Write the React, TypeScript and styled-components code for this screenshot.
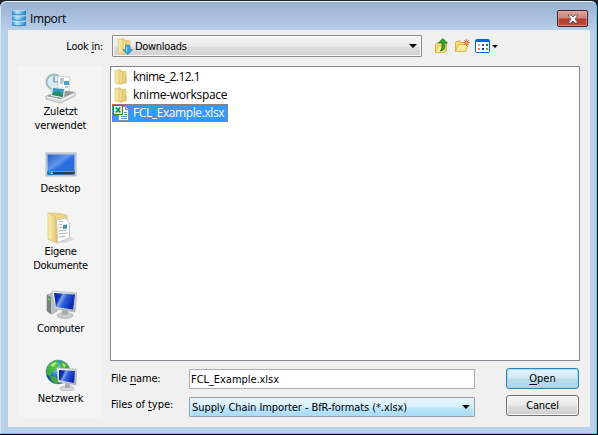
import React from 'react';
import styled, { createGlobalStyle } from 'styled-components';

const Global = createGlobalStyle`
  * { box-sizing: border-box; }
  html, body { margin: 0; padding: 0; overflow: hidden; background: #000; }
  svg { display: block; flex: none; }
`;

const Screen = styled.div`
  width: 598px;
  height: 435px;
  padding: 1px 1px 1px 0;
  background: linear-gradient(#23232b, #000 30px);
  font: 11px/14px 'DejaVu Sans Condensed', 'DejaVu Sans', sans-serif;
  font-stretch: condensed;
  color: #000;
`;

const Window = styled.div`
  display: flex;
  flex-direction: column;
  height: 433px;
  padding: 0 6px 6px 7px;
  border: 1px solid #35dcf2;
  border-top-color: #e9f2fa;
  border-left-color: #d9e8f5;
  border-radius: 6px 6px 0 0;
  background: linear-gradient(#9ab3d1 0, #a5bdda 12px, #b9d1ea 30px, #b9d1ea 100%);
`;

const TitleBar = styled.header`
  display: flex;
  align-items: flex-start;
  height: 28px;
  flex: none;
  padding: 7px 2px 0 3px;
`;

const Title = styled.h1`
  flex: 1;
  margin: 1px 0 0 3px;
  font: 12px/17px 'Open Sans', 'Noto Sans', sans-serif;
  letter-spacing: -0.4px;
`;

const CloseButton = styled.button`
  display: flex;
  align-items: center;
  justify-content: center;
  width: 31px;
  height: 17px;
  margin: 1px 0 0;
  padding: 0;
  border: 1px solid #43202a;
  border-radius: 2px;
  background: linear-gradient(#dba49b 0, #cf8377 7px, #b83b29 8px, #bd4b38 100%);
  box-shadow: inset 0 0 0 1px #e6b5ad99;
`;

const Content = styled.main`
  display: flex;
  flex-direction: column;
  flex: 1;
  min-height: 0;
  background: #f0f0f0;
`;

const Toolbar = styled.div`
  display: flex;
  align-items: center;
  height: 32px;
  flex: none;
`;

const Text = styled.span<{ $spacing?: number; $drop?: number }>`
  padding-top: ${({ $drop = 0 }) => $drop}px;
  letter-spacing: ${({ $spacing = 0 }) => $spacing}px;
  white-space: nowrap;
  u { text-underline-offset: 2px; text-decoration-thickness: 1px; text-decoration-skip-ink: none; }
`;

const LookLabel = styled.label`
  width: 95px;
  margin-right: 9px;
  padding-top: 2px;
  text-align: right;
`;

const LookSelect = styled.div`
  display: flex;
  align-items: center;
  gap: 2px;
  width: 310px;
  height: 22px;
  padding: 0 4px 0 3px;
  border: 1px solid #8b8b8b;
  border-radius: 1px;
  background: linear-gradient(#f3f3f3 0, #ececec 10px, #dedede 11px, #d0d0d0 100%);
  box-shadow: inset 0 0 0 1px #fafafa;
`;

const Grow = styled.div`
  flex: 1;
`;

const Tools = styled.div`
  display: flex;
  align-items: center;
  margin-left: 12px;
`;

const Tool = styled.div<{ $width: number }>`
  width: ${({ $width }) => $width}px;
`;

const Body = styled.div`
  display: flex;
  flex: 1;
  min-height: 0;
  padding: 4px 10px 10px;
`;

const Places = styled.nav`
  width: 85px;
  height: 351px;
  margin-right: 7px;
  padding-top: 6px;
  background: #f4f4f4;
`;

const Place = styled.div<{ $height: number }>`
  display: flex;
  flex-direction: column;
  align-items: center;
  height: ${({ $height }) => $height}px;
  text-align: center;
  svg { margin-bottom: 1px; }
`;

const Main = styled.div`
  display: flex;
  flex-direction: column;
  width: 470px;
`;

const FileList = styled.div`
  height: 295px;
  flex: none;
  padding: 1px 0 0 1px;
  border: 1px solid #828790;
  background: #fff;
  font: 12px/16px 'Open Sans', 'Noto Sans', sans-serif;
`;

const FileRow = styled.div<{ $selected?: boolean }>`
  display: flex;
  align-items: center;
  gap: 4px;
  width: ${({ $selected }) => ($selected ? '116px' : 'auto')};
  height: 18px;
  border: 1px ${({ $selected }) => ($selected ? 'dotted #d0700c' : 'solid transparent')};
  color: ${({ $selected }) => ($selected ? '#fff' : '#000')};
  background: ${({ $selected }) => ($selected ? '#3399ff' : 'transparent')};
`;

const Form = styled.div`
  display: grid;
  grid-template-columns: 78px 286px 73px;
  justify-content: start;
  padding: 7px 0 0 1px;
`;

const FieldLabels = styled.div`
  display: flex;
  flex-direction: column;
  gap: 12px;
  padding-top: 4px;
`;

const Fields = styled.div`
  display: flex;
  flex-direction: column;
  gap: 8px;
  padding-top: 1px;
`;

const NameField = styled.div`
  height: 20px;
  padding: 2px 1px;
  line-height: 16px;
  border: 1px solid #abadb3;
  background: #fff;
`;

const TypeField = styled.div`
  display: flex;
  align-items: center;
  height: 20px;
  padding: 0 4px 0 2px;
  border: 1px solid #98a0aa;
  border-radius: 1px;
  background: linear-gradient(#e8f5fc 0, #d8f0fc 9px, #bbe5fb 10px, #a9dbf7 100%);
  box-shadow: inset 1px 0 0 #cdefff, inset -1px 0 0 #cdefff;
`;

const Actions = styled.div`
  display: flex;
  flex-direction: column;
  gap: 6px;
  margin-left: 31px;
  width: 73px;
`;

const PushButton = styled.button<{ $primary?: boolean }>`
  height: 21px;
  padding: 1px 0 0;
  border: 1px solid ${({ $primary }) => ($primary ? '#3c7fb1' : '#707070')};
  border-radius: 3px;
  color: #000;
  font: inherit;
  line-height: 16px;
  background: ${({ $primary }) =>
    $primary
      ? 'linear-gradient(#e5f3fa 0, #d5eaf4 9px, #bcdeec 10px, #b2d3e3 100%)'
      : 'linear-gradient(#f2f2f2 0, #ebebeb 9px, #dddddd 10px, #cfcfcf 100%)'};
  box-shadow: inset 0 0 0 1px ${({ $primary }) => ($primary ? '#8fe0fa' : '#f7f7f7')};
`;

const Arrow = ({ w = 8 }: { w?: number }) => (
  <svg width={w} height={w / 2} viewBox="0 0 8 4"><path d="M0 0H8L4 4Z" fill="#000" /></svg>
);

const Gradients = () => (
  <svg width="0" height="0">
    <defs>
      <linearGradient id="folder"><stop stopColor="#fbf0b8" /><stop offset="1" stopColor="#e5c667" /></linearGradient>
      <linearGradient id="folderDark"><stop stopColor="#d8b44e" /><stop offset="1" stopColor="#f3de91" /></linearGradient>
      <linearGradient id="db"><stop stopColor="#2191d9" /><stop offset=".35" stopColor="#b4e6ff" /><stop offset="1" stopColor="#1d83cc" /></linearGradient>
      <linearGradient id="screen" x2="1" y2=".4"><stop stopColor="#0720a0" /><stop offset=".3" stopColor="#0d30b8" /><stop offset=".42" stopColor="#7fa3f0" /><stop offset=".6" stopColor="#2f5bda" /><stop offset="1" stopColor="#0829b5" /></linearGradient>
      <linearGradient id="desktop" x2="1" y2="1"><stop stopColor="#265cc6" /><stop offset=".4" stopColor="#6396ec" /><stop offset=".55" stopColor="#2a6de1" /><stop offset="1" stopColor="#2470e0" /></linearGradient>
      <linearGradient id="metal" x2="1" y2="1"><stop stopColor="#fff" /><stop offset="1" stopColor="#a5a9aa" /></linearGradient>
      <radialGradient id="globe" cx=".4" cy=".3"><stop stopColor="#b9f1ff" /><stop offset=".5" stopColor="#3c9bd9" /><stop offset="1" stopColor="#164b99" /></radialGradient>
    </defs>
  </svg>
);

const DatabaseIcon = () => (
  <svg width="16" height="18" viewBox="0 0 16 18">
    {[1, 6.5, 12].map((y) => (
      <g key={y}>
        <path d={`M1 ${y}Q8 ${y + 1} 15 ${y}V${y + 4.2}Q8 ${y + 5.4} 1 ${y + 4.2}Z`} fill="url(#db)" />
        <path d={`M1 ${y + 4.2}Q8 ${y + 5.4} 15 ${y + 4.2}`} fill="none" stroke="#1672b4" strokeWidth=".7" />
        <path d={`M1.500 ${y + 0.4}Q8 ${y + 1.2} 14.500 ${y + 0.4}`} fill="none" stroke="#d4f2ff" strokeWidth=".7" />
      </g>
    ))}
  </svg>
);

const FolderShape = () => (
  <>
    <path d="M7 3l6 -1v12l-6 1z" fill="url(#folderDark)" stroke="#d5b761" strokeWidth=".6" />
    <path d="M12 8l1.500 .5v5l-1.500 .8z" fill="#d9bd68" />
    <path d="M2 1.500l5-.8 1.200 1v13.600L2 14z" fill="url(#folder)" stroke="#d9bd66" strokeWidth=".7" />
    <path d="M8 3v11" stroke="#fff7c9" strokeWidth=".8" />
  </>
);

const FolderIcon = () => <svg width="16" height="16" viewBox="0 0 16 16"><FolderShape /></svg>;

const DownloadsIcon = () => (
  <svg width="17" height="17" viewBox="0 0 16 16">
    <FolderShape />
    <path d="M9 7h4v4h2.500L11 15.700 6.800 11H9z" fill="#31aaf0" stroke="#187abd" strokeWidth=".7" />
    <path d="M10 8v5" stroke="#8edaff" />
  </svg>
);

const CloseIcon = () => (
  <svg width="12" height="10" viewBox="0 0 12 10">
    <path d="M1 1h3l2 2 2-2h3L8 5l3 4H8L6 7 4 9H1l3-4z" fill="#fff" stroke="#52536a" strokeWidth=".9" />
  </svg>
);

const OpenFolder = () => (
  <>
    <path d="M1.500 13.500V4.500L3 3h3l1.500 1.500h5v8z" fill="#f5d675" stroke="#dcae39" />
    <path d="M1.500 13.500l3-7h10l-3 7z" fill="#ffeba0" stroke="#e3b94b" />
  </>
);

const UpIcon = () => (
  <svg width="16" height="16" viewBox="0 0 16 16">
    <path d="M1.500 14.500V6L4 4.500h8.500V13l-2 1.500z" fill="#f8dd80" stroke="#dcae39" />
    <path d="M1.500 14.500l3-6.500h8.500l-2.500 6.500z" fill="#ffeba0" stroke="#e3b94b" strokeWidth=".8" />
    <path d="M4.500 5L8.700 .6 13.500 5h-2.700v4.500Q10.500 12.500 6 13q2-1.500 2-4V5z" fill="#36a529" stroke="#187a18" strokeWidth=".8" />
  </svg>
);

const NewFolderIcon = () => (
  <svg width="17" height="16" viewBox="0 0 17 16">
    <OpenFolder />
    <path d="M12.500 1v7M9 4.500h7M10 2l5 5M15 2l-5 5" stroke="#f47c50" strokeWidth="1" />
    <circle cx="12.500" cy="4.500" r="1.500" fill="#ffd06a" stroke="#ef5230" />
  </svg>
);

const ViewIcon = () => (
  <svg width="15" height="14" viewBox="0 0 15 14">
    <rect x=".5" y=".5" width="14" height="13" rx="1" fill="#fff" stroke="#0762c8" />
    <path d="M1 1h13v2H1z" fill="#0868d6" />
    <path d="M3 5h2v2H3z" fill="#a9a9c0" /><path d="M7 5h2v2H7z" fill="#3e58c8" /><path d="M11 5h2v2h-2z" fill="#07930d" />
    <path d="M3 9h2v2H3z" fill="#ff7655" /><path d="M7 9h2v2H7z" fill="#183a91" /><path d="M11 9h2v2h-2z" fill="#c59712" />
  </svg>
);

const ExcelIcon = () => (
  <svg width="16" height="16" viewBox="0 0 16 16">
    <path d="M5.500 1.500h7l3 3v11h-10z" fill="#f5faff" stroke="#7b92aa" />
    <path d="M12.500 1.500v3h3" fill="#cddcea" stroke="#7b92aa" />
    <path d="M8 11.500h6M8 13.500h6M11 7.500h3M11 9.500h3" stroke="#7494bd" />
    <rect x=".5" y=".5" width="9" height="9" fill="#e9f5e7" stroke="#2e812d" />
    <path d="M2.800 2.500l4.500 5M7.300 2.500l-4.500 5" stroke="#1d8429" strokeWidth="1.700" />
  </svg>
);

const RecentIcon = () => (
  <svg width="32" height="32" viewBox="0 0 32 32">
    <circle cx="9" cy="10" r="7.500" fill="#dcecf3" stroke="#a4b9c3" strokeWidth="2" />
    <path d="M9 4v6h5" fill="none" stroke="#6d91a5" strokeWidth="1.200" />
    <path d="M13 4l12 1-1 16-11-2z" fill="#fff" stroke="#bababa" strokeWidth=".7" />
    <path d="M15 7h4M15 9h4M15 11h3M20 15h3" stroke="#7c8b99" /><path d="M19 9h5v4h-5z" fill="#4aa3c5" />
    <path d="M1 24l15-6 14 2-14 8z" fill="#969a98" />
    <path d="M7 15l13 1-1 10-13-2z" fill="#fff" stroke="#c2c6c8" strokeWidth=".5" />
    <path d="M8 16l11 1-1 8-11-2z" fill="#3498c8" /><path d="M8 21l5-2 5 3v3l-11-2z" fill="#278e63" />
    <path d="M1 24l15 3 14-7v4l-14 7-15-4z" fill="#d9dddc" stroke="#a3a6a3" strokeWidth=".7" />
    <path d="M2 25l14 3 13-6" fill="none" stroke="#fff" />
  </svg>
);

const DesktopIcon = () => (
  <svg width="32" height="32" viewBox="0 0 32 32">
    <rect x="1" y="4" width="30" height="23" fill="#cfd8df" stroke="#a0a9b5" strokeWidth=".8" />
    <path d="M2.500 5.500h27v20h-27z" fill="url(#desktop)" />
    <path d="M2.500 22h27v3.500h-27z" fill="#253c54" /><path d="M8 22.500h21" stroke="#7894a5" />
    <circle cx="5.500" cy="23.500" r="2.700" fill="#167fca" />
    <path d="M4 22h1.500v1.500H4z" fill="#f96d3e" /><path d="M6 22h1.500v1.500H6z" fill="#83d85c" /><path d="M6 24h1.500v1H6z" fill="#ffe566" />
  </svg>
);

const DocumentsIcon = () => (
  <svg width="32" height="32" viewBox="0 0 32 32">
    <path d="M12 30l15-5 3 2-10 4z" fill="#c4c4bc" opacity=".5" />
    <path d="M4 1l12 .5 6 2v21l-8 5-10-2z" fill="#ecd48a" stroke="#dabf71" strokeWidth=".7" />
    <path d="M11.500 8l9-2 4 5v15l-12 5z" fill="#fff" stroke="#b1b8bc" strokeWidth=".8" />
    <path d="M13.500 10l5-1M13.500 13l4-1M13.500 16l4-1M13.500 19l9-1M13.500 22l9-1M13.500 25l7-1" stroke="#acb4bc" />
    <path d="M18 13l4-.6v4l-4 .6z" fill="#438fae" />
    <path d="M3 1l7.500 4 1.500 26-9-4z" fill="url(#folder)" stroke="#d7bd72" strokeWidth=".7" />
  </svg>
);

const ComputerIcon = () => (
  <svg width="32" height="32" viewBox="0 0 32 32">
    <path d="M2 6l6-2 4 2v16l-6 3-4-3z" fill="#bcbfc0" stroke="#7f8689" strokeWidth=".6" />
    <path d="M2 6l4 2v17l-4-3z" fill="#777f82" /><path d="M3 9l2 .5v2L3 11z" fill="#59d63c" />
    <ellipse cx="20" cy="26.500" rx="8" ry="3" fill="#cacdcd" stroke="#a5a8a9" strokeWidth=".6" />
    <path d="M17 20h6v6h-6z" fill="#a8adaf" />
    <path d="M7 2l25 2-2 19-20-3z" fill="url(#metal)" stroke="#afb4b6" strokeWidth=".7" />
    <path d="M9 4l21 1.500-2 15-17-2.500z" fill="url(#screen)" />
  </svg>
);

const NetworkIcon = () => (
  <svg width="32" height="32" viewBox="0 0 32 32">
    <circle cx="13" cy="13" r="12" fill="url(#globe)" stroke="#4c95aa" strokeWidth=".6" />
    <path d="M3 7q4-6 11-6l-2 3 2 2-3 5-4 2-2 5-4-4zM16 2q6 1 8 7l-5 2-4-3zM5 17l6 1 3 5-3 2q-5-2-6-8z" fill="#48ba29" opacity=".85" />
    <path d="M5 6l5-3 2 1-4 4zM17 4l4 2-2 3z" fill="#b6eb67" />
    <ellipse cx="22" cy="29.500" rx="7" ry="2.500" fill="#d5d7d9" stroke="#a4aaae" strokeWidth=".6" />
    <path d="M20 24h5v5h-5z" fill="#a9aeb3" />
    <path d="M12 9l20 1-1 16-18-3z" fill="url(#metal)" stroke="#b5b8ba" strokeWidth=".6" />
    <path d="M14 11l16 1-1 12-15-3z" fill="url(#screen)" />
  </svg>
);

export default function App() {
  return (
    <Screen>
      <Global />
      <Gradients />
      <Window>
        <TitleBar>
          <DatabaseIcon />
          <Title>Import</Title>
          <CloseButton aria-label="Close"><CloseIcon /></CloseButton>
        </TitleBar>
        <Content>
          <Toolbar>
            <LookLabel><Text $spacing={-0.25}>Look <u>i</u>n:</Text></LookLabel>
            <LookSelect>
              <DownloadsIcon />
              <Text $spacing={-0.3} $drop={2}>Downloads</Text>
              <Grow />
              <Arrow />
            </LookSelect>
            <Tools>
              <Tool $width={20}><UpIcon /></Tool>
              <Tool $width={21}><NewFolderIcon /></Tool>
              <Tool $width={17}><ViewIcon /></Tool>
              <Arrow w={6} />
            </Tools>
          </Toolbar>
          <Body>
            <Places>
              <Place $height={77}><RecentIcon /><Text $spacing={-0.1}>Zuletzt<br />verwendet</Text></Place>
              <Place $height={63}><DesktopIcon /><Text $spacing={-0.1}>Desktop</Text></Place>
              <Place $height={77}><DocumentsIcon /><Text $spacing={-0.3}>Eigene<br />Dokumente</Text></Place>
              <Place $height={70}><ComputerIcon /><Text $spacing={-0.3}>Computer</Text></Place>
              <Place $height={50}><NetworkIcon /><Text $spacing={-0.1}>Netzwerk</Text></Place>
            </Places>
            <Main>
              <FileList>
                <FileRow><FolderIcon /><Text $spacing={-0.55}>knime_2.12.1</Text></FileRow>
                <FileRow><FolderIcon /><Text $spacing={-0.27}>knime-workspace</Text></FileRow>
                <FileRow $selected><ExcelIcon /><Text $spacing={-0.4}>FCL_Example.xlsx</Text></FileRow>
              </FileList>
              <Form>
                <FieldLabels>
                  <Text $spacing={-0.15}>File <u>n</u>ame:</Text>
                  <Text $spacing={-0.05}>Files of <u>t</u>ype:</Text>
                </FieldLabels>
                <Fields>
                  <NameField><Text $spacing={-0.05}>FCL_Example.xlsx</Text></NameField>
                  <TypeField><Text $spacing={-0.07} $drop={1}>Supply Chain Importer - BfR-formats (*.xlsx)</Text><Grow /><Arrow /></TypeField>
                </Fields>
                <Actions>
                  <PushButton $primary><Text><u>O</u>pen</Text></PushButton>
                  <PushButton><Text $spacing={-0.15}>Cancel</Text></PushButton>
                </Actions>
              </Form>
            </Main>
          </Body>
        </Content>
      </Window>
    </Screen>
  );
}
